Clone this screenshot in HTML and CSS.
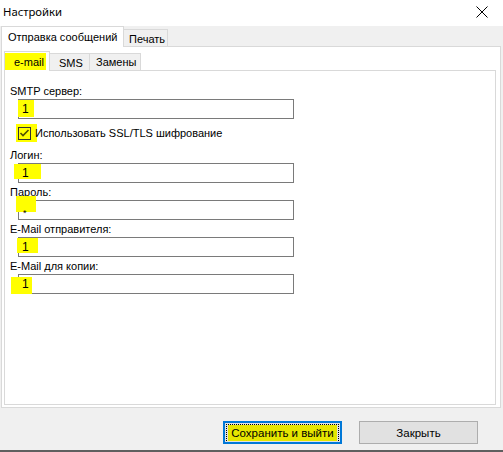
FILE: index.html
```html
<!DOCTYPE html>
<html>
<head>
<meta charset="utf-8">
<link rel="stylesheet" href="styles.css">
</head>
<body>
<div class="window">
  <div class="titlebar">
    <span class="title">Настройки</span>
    <svg class="close" width="12" height="12" viewBox="0 0 12 12"><path d="M0.5 0.5 L11.5 11.5 M11.5 0.5 L0.5 11.5" stroke="#000" stroke-width="1" fill="none"/></svg>
  </div>
  <div class="body">
    <div class="tabs outer">
      <div class="tabstrip">
        <div class="tab active">Отправка сообщений</div>
        <div class="tab">Печать</div>
      </div>
      <div class="panel outer-panel">
        <div class="tabs inner">
          <div class="tabstrip">
            <div class="tab active hl-tab"><span class="tab-text">e-mail</span></div>
            <div class="tab">SMS</div>
            <div class="tab">Замены</div>
          </div>
          <div class="panel inner-panel">
            <div class="field">
              <div class="label">SMTP сервер:</div>
              <div class="input"><span class="mark m1"></span><span class="value">1</span></div>
            </div>
            <div class="check-row">
              <span class="check-mark">
                <span class="checkbox">
                  <svg width="11" height="11" viewBox="0 0 11 11"><path d="M1.5 5 L4 7.5 L9.5 2" stroke="#505000" stroke-width="1.6" fill="none"/></svg>
                </span>
              </span>
              <span class="check-label">Использовать SSL/TLS шифрование</span>
            </div>
            <div class="field">
              <div class="label">Логин:</div>
              <div class="input"><span class="mark m2"></span><span class="value">1</span></div>
            </div>
            <div class="field">
              <div class="label">Пароль:</div>
              <div class="input"><span class="mark m3"></span><span class="value pw">*</span></div>
            </div>
            <div class="field">
              <div class="label">E-Mail отправителя:</div>
              <div class="input"><span class="mark m4"></span><span class="value">1</span></div>
            </div>
            <div class="field">
              <div class="label">E-Mail для копии:</div>
              <div class="input"><span class="mark m5"></span><span class="value">1</span></div>
            </div>
          </div>
        </div>
      </div>
    </div>
    <div class="buttons">
      <button class="btn primary"><span class="focus"><span class="btn-text">Сохранить и выйти</span></span></button>
      <button class="btn">Закрыть</button>
    </div>
  </div>
  <div class="bottomline"></div>
</div>
</body>
</html>
```

FILE: styles.css
```css
* { box-sizing: border-box; }
html, body { margin: 0; padding: 0; }
body {
  width: 503px;
  height: 452px;
  overflow: hidden;
  background: #f0f0f0;
  font-family: "Liberation Sans", Arial, sans-serif;
  font-size: 11px;
  color: #000;
}
.window {
  width: 503px;
  height: 452px;
  display: flex;
  flex-direction: column;
}
.titlebar {
  height: 26px;
  background: #fff;
  display: flex;
  align-items: center;
  justify-content: space-between;
  padding: 0 15px 3px 3px;
}
.title {
  font-family: "Noto Sans", "Open Sans", sans-serif;
  font-size: 11.3px;
  color: #000;
}
.close { display: block; margin-top: 1px; }
.body {
  flex: 1;
  display: flex;
  flex-direction: column;
}
.tabs.outer { margin: 0 2px 0 1px; }
.tabstrip {
  display: flex;
  align-items: flex-end;
  position: relative;
  z-index: 1;
}
.tab {
  flex-shrink: 0;
  white-space: nowrap;
  background: #f0f0f0;
  border: 1px solid #d9d9d9;
  border-bottom: none;
  height: 17px;
  line-height: 17px;
  padding: 0 5px;
  margin-left: -1px;
}
.tab:first-child { margin-left: 0; }
.tab.active {
  background: #fff;
  margin-bottom: -1px;
  height: 21px;
  line-height: 20px;
}
.outer .tabstrip > .tab.active { width: 123px; padding-left: 6px; }
.outer .tabstrip > .tab:nth-child(2) { width: 45px; padding-left: 5px; line-height: 18px; }
.panel {
  background: #fff;
  border: 1px solid #d9d9d9;
}
.outer-panel {
  height: 362px;
  padding: 4px 4px 3px 2px;
}
.tabs.inner .tab { height: 17px; line-height: 17px; }
.tabs.inner .tab.active { height: 20px; line-height: 17px; width: 46px; padding-left: 9px; }
.tabs.inner .tab:nth-child(2) { width: 41px; padding-left: 9px; }
.tabs.inner .tab:nth-child(3) { width: 52px; padding-left: 6px; }
.hl-tab {
  position: relative;
  padding-top: 2px;
}
.hl-tab::before {
  content: "";
  position: absolute;
  left: 0;
  top: 1px;
  width: 41px;
  height: 17px;
  background: #ffff00;
}
.tab-text { position: relative; }
.inner-panel {
  height: 335px;
  padding: 14px 0 0 5px;
}
.field { margin-bottom: 3px; }
.label {
  height: 14px;
  line-height: 13px;
}
.input {
  position: relative;
  margin-left: 8px;
  width: 276px;
  height: 20px;
  border: 1px solid #7a7a7a;
  background: #fff;
  padding-left: 3px;
  line-height: 18px;
  font-size: 12px;
}
.value { position: relative; }
.pw { font-size: 9px; top: 2px; left: 1px; }
.mark {
  position: absolute;
  background: #ffff00;
}
.m1 { left: -1px; top: 0; width: 16px; height: 17px; }
.m2 { left: -5px; top: 0; width: 27px; height: 15px; }
.m3 { left: -3px; top: -5px; width: 20px; height: 16px; }
.m4 { left: -2px; top: 0; width: 21px; height: 15px; }
.m5 { left: -8px; top: 2px; width: 21px; height: 17px; }
.check-row {
  display: flex;
  align-items: center;
  height: 18px;
  margin: 5px 0 7px 6px;
}
.check-mark {
  width: 21px;
  height: 18px;
  background: #ffff00;
  display: flex;
  align-items: center;
  padding-left: 2px;
}
.checkbox {
  width: 13px;
  height: 13px;
  border: 1px solid #333;
  display: flex;
  align-items: center;
  justify-content: center;
}
.checkbox svg { display: block; }
.check-label { margin-left: -2px; }
.buttons {
  display: flex;
  justify-content: flex-end;
  gap: 17px;
  padding: 13px 25px 0 0;
  height: 42px;
}
.btn {
  width: 119px;
  height: 23px;
  border: 1px solid #adadad;
  background: #e1e1e1;
  font-family: "Liberation Sans", Arial, sans-serif;
  font-size: 11.5px;
  color: #000;
  padding: 0;
  margin: 0;
}
.btn.primary {
  border: 2px solid #0078d7;
  padding: 1px;
}
.focus {
  display: flex;
  align-items: center;
  justify-content: center;
  width: 100%;
  height: 100%;
  border: 1px dotted #000;
  background: #e1e1e1;
}
.btn-text {
  background: #e6e600;
  padding: 1px 3px;
  line-height: 14px;
}
.bottomline {
  height: 2px;
  background: #5f5f5f;
}
```
